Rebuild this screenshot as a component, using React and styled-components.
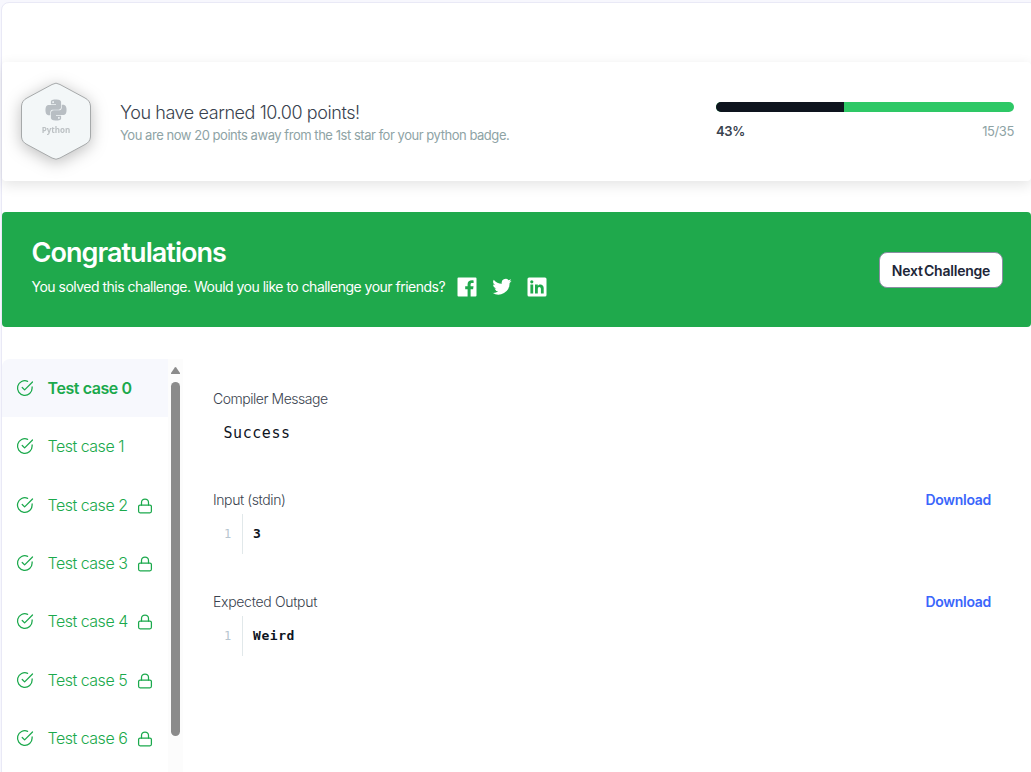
import React from "react";
import styled, { createGlobalStyle } from "styled-components";

const GlobalStyle = createGlobalStyle`
  * { box-sizing: border-box; }
  body { margin: 0; background: #f7f7fd; overflow: hidden; font-family: Inter, "Liberation Sans", sans-serif; }
`;

const Page = styled.div`
  height: 772px;
  padding: 2px 0 0 1px;
  overflow: hidden;
`;
const Panel = styled.main`
  width: 1040px;
  height: 780px;
  border: 1px solid #e9e9f6;
  border-radius: 8px;
  background: #fff;
  padding-top: 59px;
`;
const PointsCard = styled.section`
  display: flex;
  width: 1029px;
  height: 119px;
  padding: 0 17px 0 14px;
  border-radius: 4px;
  background: #fff;
  box-shadow: 0 4px 14px rgba(0, 0, 0, 0.11);
`;
const Badge = styled.svg`
  display: block;
  width: 80px;
  height: 90px;
  margin-top: 15px;
  overflow: visible;
  filter: drop-shadow(0 3px 8px rgba(0, 0, 0, 0.26));
`;
const Earned = styled.div`
  flex: 1;
  padding: 39px 0 0 24px;
`;
const Text = styled.div`
  white-space: nowrap;
  font-size: ${(p) => p.$size}px;
  font-weight: ${(p) => p.$weight || 400};
  line-height: ${(p) => p.$line}px;
  letter-spacing: ${(p) => p.$track || 0}px;
  color: ${(p) => p.$color};
`;
const Progress = styled.div`
  width: 298px;
  padding-top: 40px;
`;
const Track = styled.div`
  height: 10px;
  border-radius: 5px;
  background: #2ec866;
  overflow: hidden;
`;
const Fill = styled.div`
  width: 43%;
  height: 100%;
  background: #0e141e;
`;
const ProgressLabels = styled.div`
  display: flex;
  justify-content: space-between;
  padding-top: 9px;
`;
const Banner = styled.section`
  display: flex;
  justify-content: space-between;
  width: 1029px;
  height: 115px;
  margin-top: 31px;
  padding: 0 28px 0 29.5px;
  border-radius: 4px;
  background: #1fa94c;
`;
const BannerCopy = styled.div`
  padding-top: 23px;
`;
const ShareRow = styled.div`
  display: flex;
  align-items: center;
  height: 20px;
  margin-top: 6px;
`;
const ShareIcons = styled.div`
  display: flex;
  gap: 15px;
  margin-left: 12px;
  svg { width: 20px; height: 20px; fill: #fff; }
`;
const NextButton = styled.button`
  width: 124px;
  height: 36px;
  margin-top: 40px;
  padding: 0;
  border: 1px solid #8b8da3;
  border-radius: 8px;
  background: #fff;
  color: #202638;
  font: 600 14px Inter, sans-serif;
  letter-spacing: -0.22px;
  word-spacing: -2px;
  white-space: nowrap;
`;
const Results = styled.section`
  display: flex;
  margin-top: 32px;
  width: 1029px;
  height: 420px;
`;
const CaseList = styled.nav`
  width: 166px;
  border-radius: 8px 0 0 0;
  overflow: hidden;
`;
const CaseItem = styled.div`
  display: flex;
  align-items: center;
  height: ${(p) => (p.$active ? 58 : 58.4)}px;
  padding-left: 14px;
  color: #1ba94c;
  background: ${(p) => (p.$active ? "#f7f8fd" : "#fff")};
  svg { flex: none; fill: none; stroke: #1ba94c; stroke-linecap: round; stroke-linejoin: round; }
`;
const CaseName = styled.span`
  width: 89px;
  margin-left: 13.5px;
  white-space: nowrap;
  font-size: 16px;
  font-weight: ${(p) => (p.$active ? 600 : 300)};
  letter-spacing: ${(p) => (p.$active ? -0.42 : -0.5)}px;
`;
const ScrollBar = styled.div`
  display: flex;
  flex-direction: column;
  align-items: center;
  width: 15px;
  padding-top: 8px;
  background: #fcfcfc;
`;
const ScrollArrow = styled.svg`
  width: 9px;
  height: 7px;
  fill: #8b8b8b;
`;
const ScrollThumb = styled.div`
  width: 9px;
  height: 354px;
  margin-top: 8px;
  border-radius: 5px;
  background: #8b8b8b;
`;
const Output = styled.div`
  flex: 1;
  padding: 30px 40px 0 30px;
`;
const OutputHead = styled.div`
  display: flex;
  justify-content: space-between;
  height: 20px;
`;
const Message = styled.pre`
  height: 81px;
  margin: 0;
  padding: 14px 0 0 10.5px;
  font: 15px/20px "DejaVu Sans Mono", monospace;
  letter-spacing: 0.55px;
  color: #0e141e;
`;
const Code = styled.div`
  display: flex;
  height: 82px;
  padding-top: 4px;
  font: bold 13px/40px "DejaVu Sans Mono", monospace;
  letter-spacing: 0.57px;
  color: #0e141e;
`;
const LineNumber = styled.span`
  width: 30px;
  height: 40px;
  padding-left: 11px;
  border-right: 1px solid #e1e8ea;
  color: #b7c5d0;
  font-size: 12px;
  font-weight: 400;
`;
const CodeLine = styled.code`
  padding-left: 10px;
  font: inherit;
`;

const HexBadge = () => (
  <Badge viewBox="0 0 80 90">
    <path d="M36 7.500Q40 4.800 44 7.500L69 21Q74 23.500 74.500 29V60Q74 65 69 67.500L44 81Q40 83.500 36 81L11 67.500Q6 65 5.500 60V29Q6 23.500 11 21Z" fill="#f3f7f8" stroke="#a6a9aa" />
    <g transform="translate(29.500 22.500) scale(.875)" fill="#b8bec3">
      <path d="M14.250.180l.9.200.730.260.590.300.450.320.340.340.250.340.160.330.100.300.040.260.020.200-.010.130V8.500l-.050.630-.130.550-.210.460-.260.380-.300.310-.330.250-.350.190-.350.140-.330.100-.300.070-.260.040-.210.020H8.770l-.690.050-.590.140-.500.220-.410.270-.330.320-.270.350-.200.360-.150.370-.100.350-.070.320-.040.270-.020.210v3.060H3.170l-.210-.030-.280-.070-.320-.120-.350-.180-.360-.260-.360-.360-.350-.460-.320-.590-.280-.730-.210-.880-.140-1.050-.050-1.230.060-1.220.160-1.040.240-.870.320-.710.360-.570.400-.440.420-.330.420-.240.400-.160.360-.100.320-.050.240-.010h.160l.060.010h8.160v-.830H6.180l-.010-2.750-.020-.370.050-.340.110-.310.170-.280.250-.260.310-.230.380-.200.440-.180.510-.150.580-.120.640-.100.710-.060.770-.040.840-.020 1.270.050zm-6.300 1.980l-.230.330-.080.410.080.410.230.340.330.220.410.090.410-.090.330-.220.230-.340.080-.410-.080-.410-.230-.330-.330-.220-.410-.090-.410.090z" />
      <path d="M21.040 6.110l.280.060.320.120.350.180.360.270.360.350.350.470.320.590.280.730.210.880.140 1.040.050 1.230-.060 1.230-.160 1.040-.240.860-.320.710-.360.570-.400.450-.420.330-.420.240-.400.160-.360.090-.320.050-.240.020-.160-.010h-8.220v.820h5.840l.010 2.760.020.360-.050.340-.110.310-.170.290-.250.250-.310.240-.380.200-.440.170-.510.150-.580.130-.640.090-.710.070-.770.040-.840.010-1.270-.040-1.070-.140-.9-.200-.730-.250-.590-.300-.450-.330-.340-.340-.250-.340-.160-.330-.100-.300-.040-.250-.020-.200.010-.130v-5.340l.050-.640.130-.540.210-.460.260-.380.300-.320.330-.240.350-.200.350-.140.330-.100.300-.060.260-.040.210-.020.130-.010h5.840l.690-.050.590-.140.500-.210.410-.280.330-.320.270-.350.200-.360.150-.360.100-.350.070-.320.040-.280.020-.210V6.070h2.090l.140.010zm-6.470 14.250l-.230.330-.080.410.080.410.230.330.330.230.410.080.410-.080.330-.230.230-.330.080-.410-.080-.410-.230-.330-.330-.230-.410-.080-.410.080z" />
    </g>
    <text x="40" y="56" textAnchor="middle" fontFamily="Open Sans, sans-serif" fontWeight="700" fontSize="8" fill="#bcc1c4">Python</text>
  </Badge>
);

const CheckIcon = () => (
  <svg width="18" height="18" viewBox="0 0 24 24" strokeWidth="1.700">
    <path d="M21.500 10.500V12A9.750 9.750 0 1 1 15.500 3.100M22 4 11.500 14.500 8.300 11.300" />
  </svg>
);
const LockIcon = () => (
  <svg width="16" height="18" viewBox="0 0 16 18" strokeWidth="1.250">
    <rect x="1.600" y="9" width="12.800" height="7.800" rx="1.500" />
    <path d="M4.500 9V6.500a3.500 3.500 0 0 1 7 0V9" />
  </svg>
);

const cases = [0, 1, 2, 3, 4, 5, 6];

export default function App() {
  return (
    <Page>
      <GlobalStyle />
      <Panel>
        <PointsCard>
          <HexBadge />
          <Earned>
            <Text $size={18} $weight={300} $line={24} $track={-0.42} $color="#39424e">You have earned 10.00 points!</Text>
            <Text $size={13} $line={20} $track={-0.46} $color="#8ea3a5">You are now 20 points away from the 1st star for your python badge.</Text>
          </Earned>
          <Progress>
            <Track><Fill /></Track>
            <ProgressLabels>
              <Text $size={13} $weight={600} $line={20} $track={-0.35} $color="#39424e">43%</Text>
              <Text $size={13} $line={20} $track={-0.4} $color="#8ea3a5">15/35</Text>
            </ProgressLabels>
          </Progress>
        </PointsCard>
        <Banner>
          <BannerCopy>
            <Text $size={27} $weight={600} $line={36} $track={-0.95} $color="#fff">Congratulations</Text>
            <ShareRow>
              <Text $size={14} $line={20} $track={-0.51} $color="#fff">You solved this challenge. Would you like to challenge your friends?</Text>
              <ShareIcons>
                <svg viewBox="0 0 20 20"><path d="M1.500.500h17q1 0 1 1v17q0 1-1 1h-4.900v-7.300h2.500l.4-2.900h-2.900V7.600c0-.9.300-1.500 1.500-1.500h1.500V3.400c-3.700-.5-6 .7-6 3.800v2.100H8.200v2.900h2.400v7.300H1.500q-1 0-1-1v-17q0-1 1-1z" /></svg>
                <svg viewBox="0 0 24 24"><path d="M23.500 4.600a9.500 9.500 0 0 1-2.700.8 4.700 4.700 0 0 0 2.100-2.600 9.500 9.500 0 0 1-3 1.100 4.700 4.700 0 0 0-8.100 4.300A13.400 13.400 0 0 1 2.100 3.300a4.700 4.700 0 0 0 1.500 6.300 4.700 4.700 0 0 1-2.200-.6v.1a4.700 4.700 0 0 0 3.800 4.600 4.700 4.700 0 0 1-2.100.1 4.700 4.700 0 0 0 4.400 3.300A9.500 9.500 0 0 1 .5 19a13.400 13.400 0 0 0 20.600-11.900 9.500 9.500 0 0 0 2.400-2.500z" /></svg>
                <svg viewBox="0 0 20 20"><path fillRule="evenodd" d="M2 .500h16q1.500 0 1.500 1.500v16q0 1.500-1.500 1.500H2Q.500 19.500.500 18V2Q.500.500 2 .500zM3.400 7.600v9h2.800v-9zM4.800 3.200a1.600 1.600 0 1 0 0 3.200 1.600 1.600 0 0 0 0-3.200zM8 7.600v9h2.800v-4.700c0-2.800 3.100-2.600 3.100.1v4.600h2.800v-5.500c0-4.100-4.300-4.600-5.900-2.200V7.600z" /></svg>
              </ShareIcons>
            </ShareRow>
          </BannerCopy>
          <NextButton>Next Challenge</NextButton>
        </Banner>
        <Results>
          <CaseList>
            {cases.map((n) => (
              <CaseItem key={n} $active={n === 0}>
                <CheckIcon />
                <CaseName $active={n === 0}>Test case {n}</CaseName>
                {n > 1 && <LockIcon />}
              </CaseItem>
            ))}
          </CaseList>
          <ScrollBar>
            <ScrollArrow viewBox="0 0 9 7"><path d="M3.800.500q.700-1 1.400 0L9 6q.2 1-.6 1H.6Q-.2 7 0 6z" /></ScrollArrow>
            <ScrollThumb />
          </ScrollBar>
          <Output>
            <OutputHead>
              <Text $size={14} $weight={300} $line={20} $track={-0.47} $color="#39424e">Compiler Message</Text>
            </OutputHead>
            <Message>Success</Message>
            <OutputHead>
              <Text $size={14} $weight={300} $line={20} $track={-0.4} $color="#39424e">Input (stdin)</Text>
              <Text as="a" $size={14} $weight={600} $line={20} $track={-0.3} $color="#3a66fb">Download</Text>
            </OutputHead>
            <Code><LineNumber>1</LineNumber><CodeLine>3</CodeLine></Code>
            <OutputHead>
              <Text $size={14} $weight={300} $line={20} $track={-0.3} $color="#39424e">Expected Output</Text>
              <Text as="a" $size={14} $weight={600} $line={20} $track={-0.3} $color="#3a66fb">Download</Text>
            </OutputHead>
            <Code><LineNumber>1</LineNumber><CodeLine>Weird</CodeLine></Code>
          </Output>
        </Results>
      </Panel>
    </Page>
  );
}
